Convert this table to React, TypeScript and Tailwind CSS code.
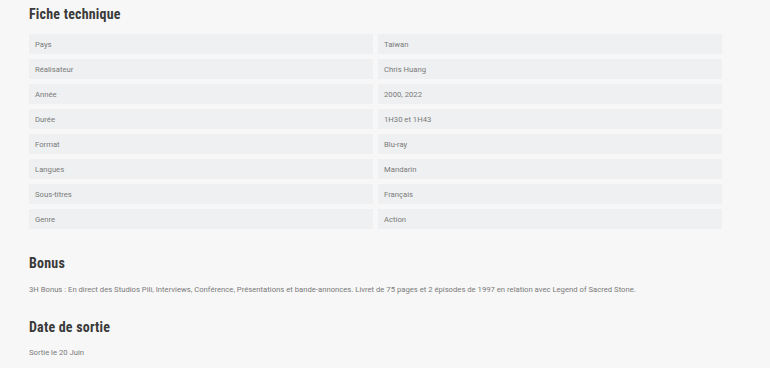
const rows: [string, string][] = [
  ['Pays', 'Taiwan'],
  ['Réalisateur', 'Chris Huang'],
  ['Année', '2000, 2022'],
  ['Durée', '1H30 et 1H43'],
  ['Format', 'Blu-ray'],
  ['Langues', 'Mandarin'],
  ['Sous-titres', 'Français'],
  ['Genre', 'Action'],
];

function Heading({ children }: { children: React.ReactNode }) {
  return (
    <h2 className="font-['Roboto_Condensed','Liberation_Sans_Narrow',Roboto,sans-serif] text-[14px] leading-[18px] font-bold text-[#3a3a3a] tracking-[0.2px]">
      {children}
    </h2>
  );
}

export default function App() {
  return (
    <div className="min-h-[368px] w-full bg-[#f7f7f7] font-['Roboto',sans-serif] text-[7.7px] text-[#7a7a7a]">
      <div className="pl-[29px] pr-[48px] pt-[5px]">
        <Heading>Fiche technique</Heading>

        <div className="mt-[11px] grid grid-cols-2 gap-x-[5px] gap-y-[5px] w-[693px]">
          {rows.map(([label, value]) => (
            <>
              <div key={label} className="h-[20px] bg-[#eef0f1] px-[6px] flex items-center pt-px">{label}</div>
              <div key={label + '-v'} className="h-[20px] bg-[#eef0f1] px-[6px] flex items-center pt-px">{value}</div>
            </>
          ))}
        </div>

        <div className="mt-[25px]">
          <Heading>Bonus</Heading>
        </div>
        <p className="mt-[12px] leading-[12px]">
          3H Bonus : En direct des Studios Pili, Interviews, Conférence, Présentations et bande-annonces. Livret de 75 pages et 2 épisodes de 1997 en relation avec Legend of Sacred Stone.
        </p>

        <div className="mt-[22px]">
          <Heading>Date de sortie</Heading>
        </div>
        <p className="mt-[11px] leading-[12px]">Sortie le 20 Juin</p>
      </div>
    </div>
  );
}
